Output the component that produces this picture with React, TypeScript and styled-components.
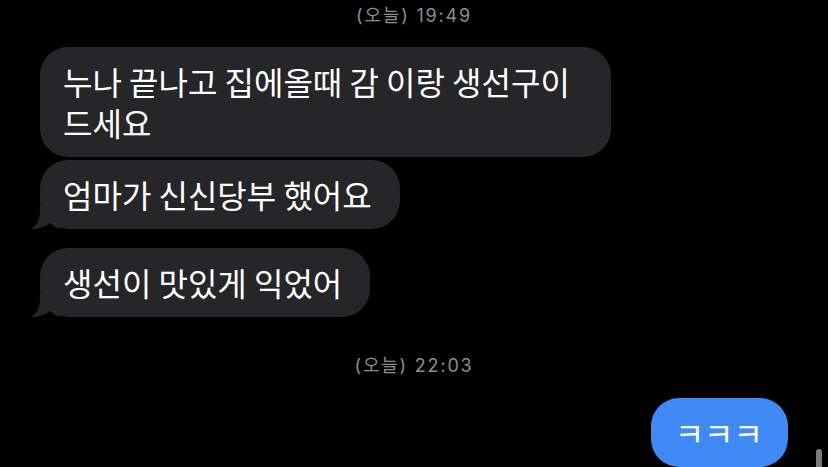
import React from 'react'
import styled, { createGlobalStyle } from 'styled-components'

const GlobalStyle = createGlobalStyle`
  html, body {
    margin: 0;
    padding: 0;
    background: #000;
  }
  body {
    font-family: 'Noto Sans CJK KR', 'Noto Sans', sans-serif;
    -webkit-font-smoothing: antialiased;
  }
`

const Screen = styled.div`
  position: relative;
  display: flex;
  flex-direction: column;
  width: 828px;
  height: 467px;
  padding: 0 40px;
  box-sizing: border-box;
  overflow: hidden;
  background: #000;
`

const Stamp = styled.div<{ $gap: number }>`
  margin-top: ${(p) => p.$gap}px;
  height: 24px;
  line-height: 24px;
  text-align: center;
  font-family: Inter, 'Noto Sans CJK KR', sans-serif;
  font-size: 18px;
  letter-spacing: 1.8px;
  color: #8d8d92;
`

const Group = styled.div<{ $gap: number }>`
  display: flex;
  flex-direction: column;
  align-items: flex-start;
  gap: 3px;
  margin-top: ${(p) => p.$gap}px;
`

const Bubble = styled.div<{ $mine?: boolean }>`
  position: relative;
  max-width: 571px;
  box-sizing: border-box;
  padding: 14px 28px 14px 23px;
  border-radius: 28px;
  background: ${(p) => (p.$mine ? '#3f8af5' : '#262629')};
  color: #fff;
  font-size: 32px;
  line-height: 41px;
  word-break: keep-all;
  align-self: ${(p) => (p.$mine ? 'flex-end' : 'flex-start')};
`

const Tail = styled.svg`
  position: absolute;
  left: -10px;
  bottom: 0;
  width: 30px;
  height: 24px;
`

const Sent = styled(Bubble)`
  margin-top: 20px;
  padding: 14px 25px 14px 24px;
`

const Scrollbar = styled.div`
  position: absolute;
  right: 6px;
  top: 449px;
  width: 6px;
  height: 40px;
  border-radius: 3px;
  background: #7b7b7b;
`

const BubbleTail = () => (
  <Tail viewBox='0 0 30 24'>
    <path
      d='M10 0 L10 6 C10 14 7 20 1 24 C8 24 15 22 20 18 C23 21 26 23 30 23.6 L30 0 Z'
      fill='#262629'
    />
  </Tail>
)

const App = () => (
  <>
    <GlobalStyle />
    <Screen>
      <Stamp $gap={4}>(오늘) 19:49</Stamp>
      <Group $gap={19}>
        <Bubble>누나 끝나고 집에올때 감 이랑 생선구이 드세요</Bubble>
        <Bubble>
          엄마가 신신당부 했어요
          <BubbleTail />
        </Bubble>
      </Group>
      <Group $gap={19}>
        <Bubble>
          생선이 맛있게 익었어
          <BubbleTail />
        </Bubble>
      </Group>
      <Stamp $gap={37}>(오늘) 22:03</Stamp>
      <Sent $mine>ㅋㅋㅋ</Sent>
      <Scrollbar />
    </Screen>
  </>
)

export default App
